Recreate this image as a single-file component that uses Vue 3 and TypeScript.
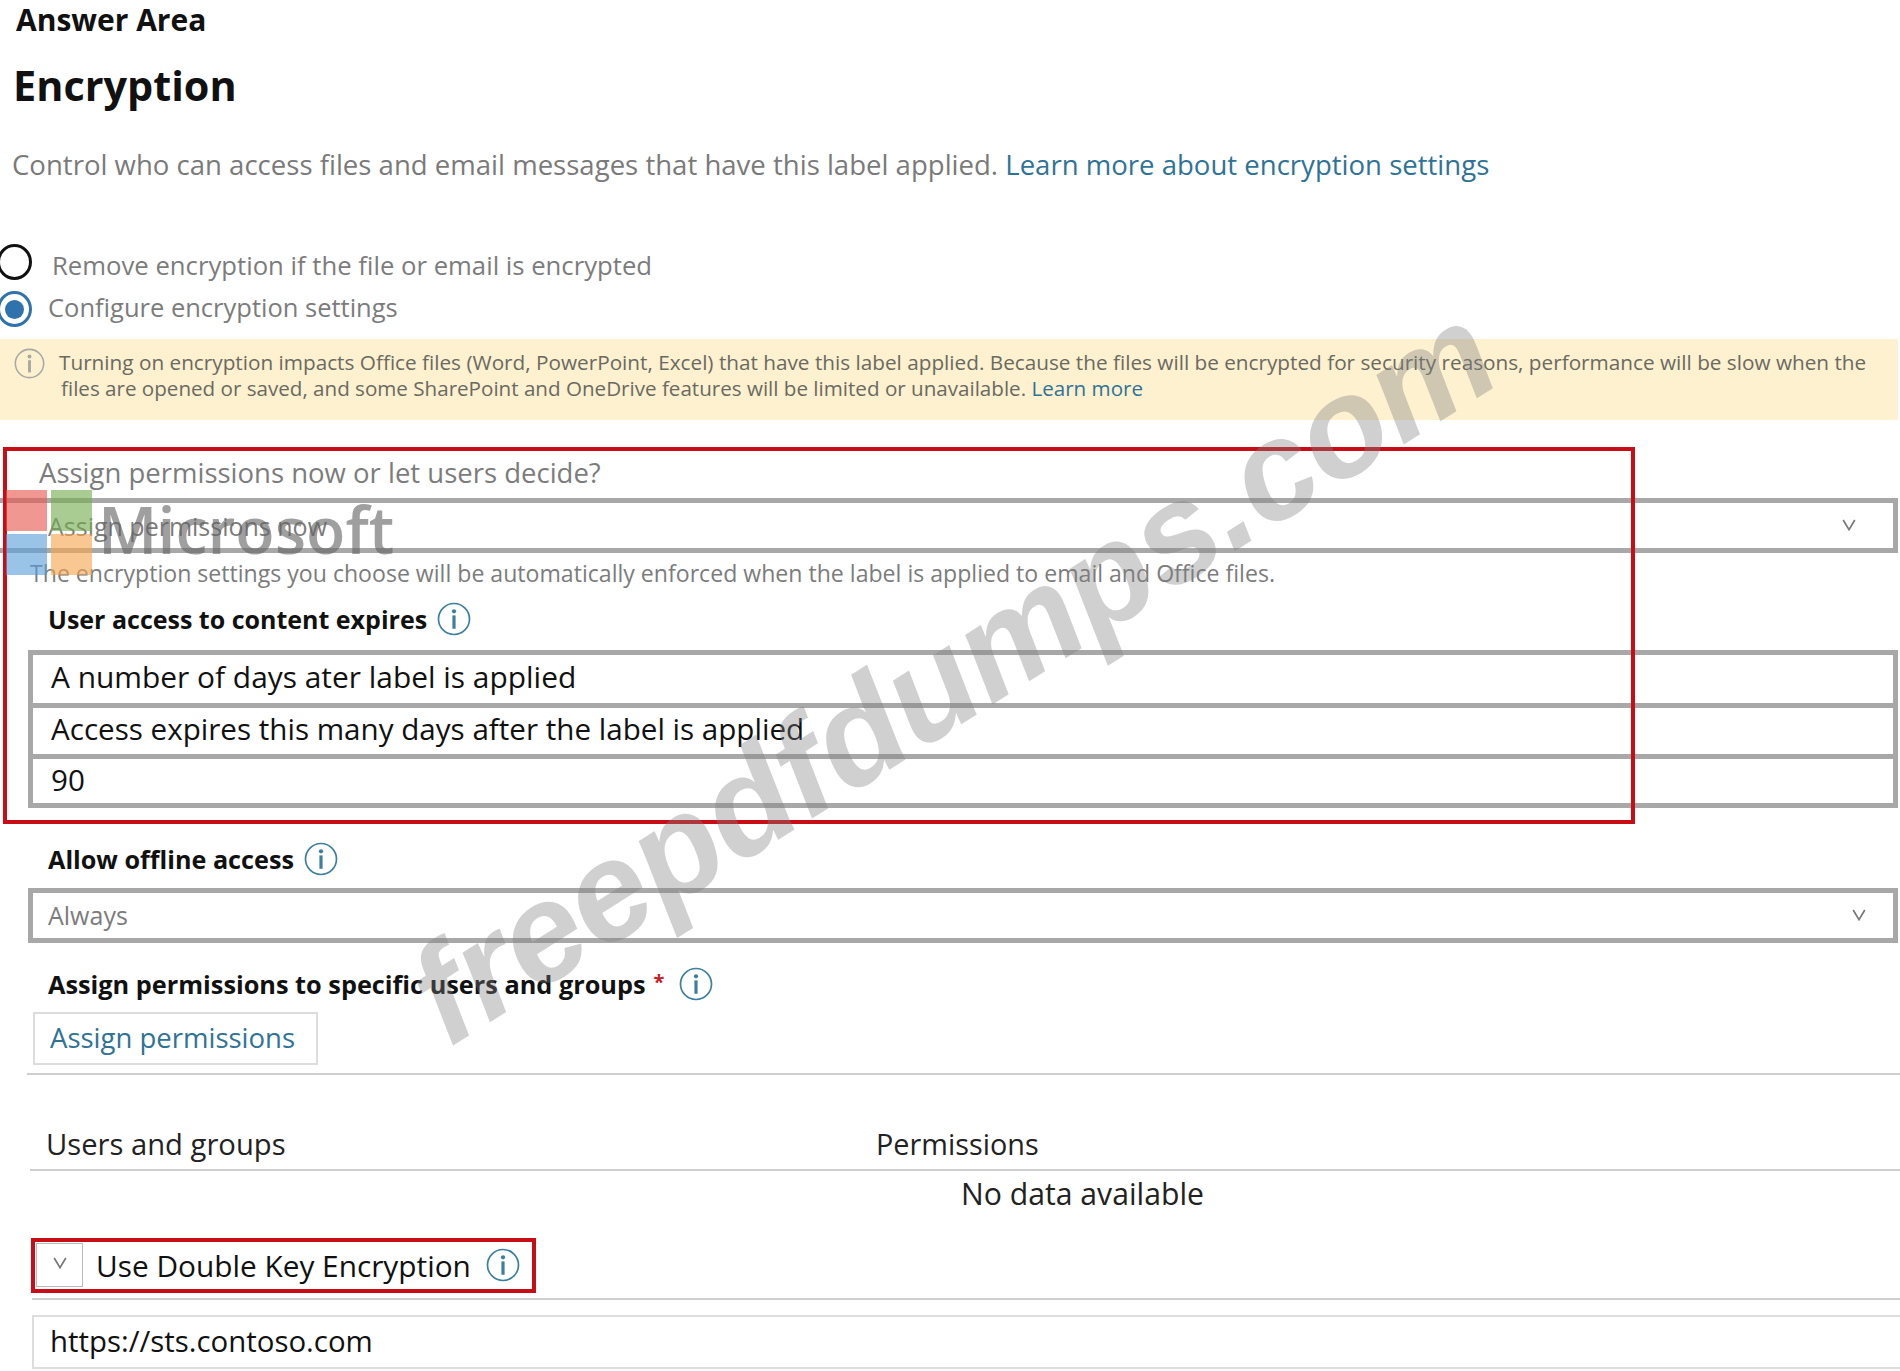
<script setup lang="ts">
const rows: string[] = [
  'A number of days ater label is applied',
  'Access expires this many days after the label is applied',
  '90',
]
</script>

<template>
  <div class="page">
    <svg class="defs" width="0" height="0" aria-hidden="true">
      <symbol id="info" viewBox="0 0 32 32">
        <circle cx="16" cy="16" r="14.6" fill="none" stroke="currentColor" stroke-width="1.6" />
        <circle cx="16" cy="8.8" r="2" fill="currentColor" />
        <rect x="14.5" y="12.6" width="3" height="12.6" fill="currentColor" />
      </symbol>
      <symbol id="chev" viewBox="0 0 14 12">
        <polyline points="1.2,1 7,10.6 12.8,1" fill="none" stroke="currentColor" stroke-width="1.7" />
      </symbol>
    </svg>

    <div class="answer">Answer Area</div>
    <h1 class="title">Encryption</h1>
    <p class="desc">
      Control who can access files and email messages that have this label applied.
      <a class="link">Learn more about encryption settings</a>
    </p>

    <div class="radio-row first">
      <span class="radio"></span>
      <span class="radio-text one">Remove encryption if the file or email is encrypted</span>
    </div>
    <div class="radio-row second">
      <span class="radio on"><i></i></span>
      <span class="radio-text two">Configure encryption settings</span>
    </div>

    <div class="banner">
      <svg class="banner-icon"><use href="#info" /></svg>
      <div class="banner-text">
        <div>Turning on encryption impacts Office files (Word, PowerPoint, Excel) that have this label applied. Because the files will be encrypted for security reasons, performance will be slow when the</div>
        <div class="indent">files are opened or saved, and some SharePoint and OneDrive features will be limited or unavailable. <a class="link">Learn more</a></div>
      </div>
    </div>

    <div class="question">Assign permissions now or let users decide?</div>
    <div class="select first-select">
      <span class="select-text">Assign permissions now</span>
      <svg class="chev a"><use href="#chev" /></svg>
    </div>
    <div class="hint">The encryption settings you choose will be automatically enforced when the label is applied to email and Office files.</div>

    <div class="label expires">User access to content expires<svg class="info"><use href="#info" /></svg></div>
    <div class="stack">
      <div v-for="row in rows" :key="row" class="stack-row">{{ row }}</div>
    </div>

    <div class="label offline">Allow offline access<svg class="info"><use href="#info" /></svg></div>
    <div class="select always">
      <span class="select-text">Always</span>
      <svg class="chev b"><use href="#chev" /></svg>
    </div>

    <div class="label specific">Assign permissions to specific users and groups<b class="star">*</b><svg class="info"><use href="#info" /></svg></div>
    <button class="assign" type="button">Assign permissions</button>
    <div class="rule r1"></div>

    <div class="table-head">
      <span class="col-users">Users and groups</span>
      <span class="col-perm">Permissions</span>
    </div>
    <div class="rule r2"></div>
    <div class="nodata">No data available</div>

    <div class="dke">
      <span class="dke-toggle"><svg class="chev c"><use href="#chev" /></svg></span>
      <span class="dke-text">Use Double Key Encryption</span>
      <svg class="info"><use href="#info" /></svg>
    </div>
    <div class="rule r3"></div>
    <div class="url">https://sts.contoso.com</div>

    <!-- annotations and stamps lying over the screenshot -->
    <div class="red big"></div>
    <div class="red small"></div>
    <div class="logo">
      <span class="sq red-sq"></span><span class="sq green-sq"></span>
      <span class="sq blue-sq"></span><span class="sq orange-sq"></span>
      <span class="logo-text">Microsoft</span>
    </div>
    <div class="mark">freepdfdumps.com</div>
  </div>
</template>

<style>
html, body { margin: 0; background: #fff; }
</style>

<style scoped>
.page {
  position: relative;
  width: 1900px;
  height: 1371px;
  overflow: hidden;
  background: #fff;
  font-family: "Open Sans", "Noto Sans", sans-serif;
  color: #111;
  display: flex;
  flex-direction: column;
}
.page > * { flex: none; }
.defs { position: absolute; }
.answer { height: 40px; line-height: 40px; padding-left: 16px; font-size: 30px; font-weight: 700; color: #111; }
.title { margin: 21px 0 0; height: 48px; line-height: 48px; padding-left: 13px; font-size: 41.4px; font-weight: 700; color: #111; }
.desc { margin: 36px 0 0; height: 40px; line-height: 40px; padding-left: 12px; font-size: 27.55px; color: #7a7a7a; white-space: nowrap; }
.link { color: #2f7396; }
.radio-row { display: flex; align-items: center; margin-left: -3px; }
.radio-row.first { margin-top: 58px; height: 37px; }
.radio-row.second { margin-top: 10px; height: 38px; }
.radio { box-sizing: border-box; width: 35px; height: 36px; border: 3px solid #111; border-radius: 50%; display: flex; align-items: center; justify-content: center; flex: none; background: #fff; }
.radio.on { border-color: #2f72ad; }
.radio.on i { width: 19px; height: 19px; border-radius: 50%; background: #2f72ad; }
.radio-text { font-size: 25.7px; color: #7c7c7c; white-space: nowrap; }
.radio-text.one { margin-left: 20px; position: relative; top: 4px; }
.radio-text.two { margin-left: 16px; position: relative; top: -2px; font-size: 25.5px; }
.banner { margin-top: 11px; height: 81px; width: 1898px; background: #fdf1cf; display: flex; }
.banner-icon { width: 31px; height: 31px; margin: 9px 0 0 14px; color: #a9a9a3; flex: none; }
.banner-text { margin: 10px 0 0 14px; font-size: 20.74px; line-height: 26px; color: #6a6a62; white-space: nowrap; }
.indent { padding-left: 2px; font-size: 20.6px; }
.question { margin-top: 33px; height: 40px; line-height: 39px; padding-left: 39px; font-size: 27.5px; color: #7c7c7c; }
.select { box-sizing: border-box; margin-left: 28px; width: 1870px; height: 55px; border: 5px solid #a8a8a8; display: flex; align-items: center; position: relative; }
.first-select { margin-top: 5px; margin-left: 0; width: 1898px; border-left: none; }
.select-text { font-size: 25px; color: #7c7c7c; }
.first-select .select-text { padding-left: 48px; }
.always .select-text { padding: 0 0 2px 15px; }
.chev { width: 14px; height: 12px; color: #777; }
.chev.a { position: absolute; left: 1842px; top: 16px; }
.chev.b { position: absolute; left: 1819px; top: 16px; }
.hint { height: 40px; line-height: 40px; padding-left: 30px; font-size: 23.1px; color: #7c7c7c; white-space: nowrap; }
.label { height: 40px; padding-left: 48px; display: flex; align-items: center; font-size: 25.2px; font-weight: 700; color: #111; white-space: nowrap; }
.label.expires { margin-top: 6px; font-size: 25px; }
.label.offline { margin-top: 31px; }
.label.specific { margin-top: 21px; font-size: 25.3px; }
.info { width: 34px; height: 34px; color: #3d7f9f; flex: none; margin-left: 10px; }
.star { color: #c8202a; font-weight: 700; margin-left: 8px; font-size: 20px; position: relative; top: -3px; }
.specific .info { margin-left: 15px; }
.stack { box-sizing: border-box; margin: 11px 0 0 28px; width: 1870px; border: 5px solid #a8a8a8; }
.stack-row { box-sizing: border-box; height: 48px; line-height: 44px; padding-left: 18px; font-size: 29.6px; color: #111; }
.stack-row:first-child { font-size: 29.9px; }
.stack-row + .stack-row { border-top: 5px solid #a8a8a8; height: 51px; line-height: 42px; }
.stack-row:last-child { height: 49px; }
.always { margin-top: 9px; }
.assign { box-sizing: border-box; margin: 8px 0 0 33px; width: 285px; height: 53px; padding: 0 0 2px 15px; text-align: left; background: #fff; border: 2px solid #ddd; font: inherit; font-size: 27.5px; color: #2f7396; }
.rule { height: 2px; background: #cfcfcf; }
.r1 { margin: 8px 0 0 27px; }
.table-head { margin-top: 49px; height: 40px; line-height: 40px; font-size: 29.2px; color: #222; display: flex; }
.col-users { width: 876px; padding-left: 46px; box-sizing: border-box; }
.col-perm { font-size: 28.8px; }
.r2 { margin: 5px 0 0 30px; }
.nodata { margin-top: 3px; height: 40px; line-height: 40px; padding-left: 961px; font-size: 30.2px; color: #222; }
.dke { margin: 29px 0 0 36px; height: 44px; display: flex; align-items: center; }
.dke-toggle { box-sizing: border-box; width: 47px; height: 44px; border: 1px solid #bbb; display: flex; align-items: center; justify-content: center; flex: none; }
.dke-text { margin-left: 13px; font-size: 29.8px; color: #111; white-space: nowrap; }
.dke .info { margin-left: 15px; }
.chev.c { position: relative; top: -2px; }
.r3 { margin: 11px 0 0 32px; }
.url { box-sizing: border-box; margin: 15px 0 0 32px; height: 54px; line-height: 48px; padding-left: 16px; font-size: 29.4px; color: #111; border: 2px solid #ddd; border-right: none; }

.red { position: absolute; box-sizing: border-box; border: 4px solid #c90d17; pointer-events: none; }
.red.big { left: 3px; top: 447px; width: 1632px; height: 377px; }
.red.small { left: 31px; top: 1238px; width: 505px; height: 55px; }

.logo { position: absolute; left: 6px; top: 490px; width: 400px; height: 86px; pointer-events: none; }
.sq { position: absolute; width: 41px; height: 41px; opacity: .62; }
.red-sq { left: 0; top: 0; background: #e8574d; }
.green-sq { left: 45px; top: 0; background: #74ad4f; }
.blue-sq { left: 0; top: 44px; background: #5b9fd8; }
.orange-sq { left: 45px; top: 44px; background: #f4a54f; }
.logo-text { position: absolute; left: 92px; top: -3px; font-size: 64.5px; line-height: 84px; font-weight: 600; color: rgba(100, 100, 100, .62); white-space: nowrap; }

.mark {
  position: absolute;
  left: 460px;
  top: 1066px;
  transform-origin: 0 100%;
  transform: translateY(-100%) rotate(-32.3deg);
  font-family: "Liberation Sans", sans-serif;
  font-weight: 700;
  font-style: italic;
  font-size: 139px;
  line-height: 1;
  color: rgba(128, 128, 128, .37);
  white-space: nowrap;
  pointer-events: none;
}
</style>
